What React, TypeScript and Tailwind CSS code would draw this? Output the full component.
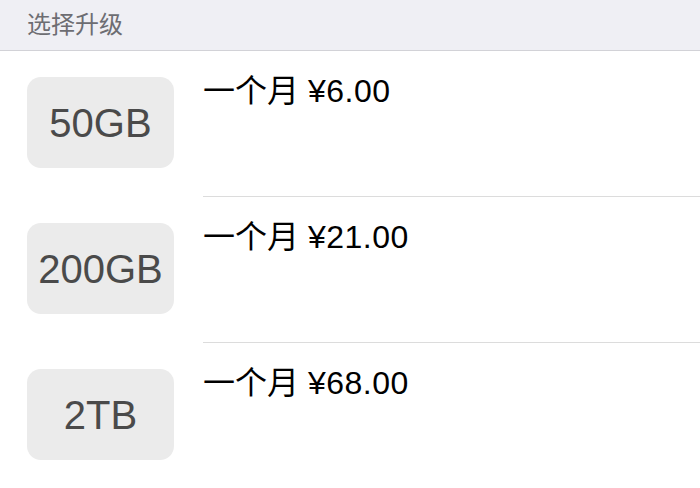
import React from "react";

const plans = [
  { size: "50GB", price: "¥6.00" },
  { size: "200GB", price: "¥21.00" },
  { size: "2TB", price: "¥68.00" },
];

export default function App() {
  return (
    <div
      className="w-[700px] h-[488px] bg-white overflow-hidden"
      style={{ fontFamily: '"Liberation Sans", "Noto Sans CJK SC", sans-serif' }}
    >
      <div className="h-[51px] bg-[#efeff4] border-b border-[#d2d2d7] flex items-center pl-[27px]">
        <span className="text-[24px] text-[#6d6d72] leading-none">选择升级</span>
      </div>
      {plans.map((p) => (
        <div key={p.size} className="flex h-[146px]">
          <div className="ml-[27px] mt-[26px] w-[147px] h-[91px] rounded-[14px] bg-[#ebebeb] flex items-center justify-center shrink-0">
            <span className="text-[40px] text-[#4a4a4a] leading-none">{p.size}</span>
          </div>
          <div className="ml-[29px] flex-1 border-b border-[#dcdcdc] pt-[22px]">
            <span className="text-[32px] text-black leading-[36px]">
              一个月 <span className="tracking-[0.5px]">{p.price}</span>
            </span>
          </div>
        </div>
      ))}
    </div>
  );
}
